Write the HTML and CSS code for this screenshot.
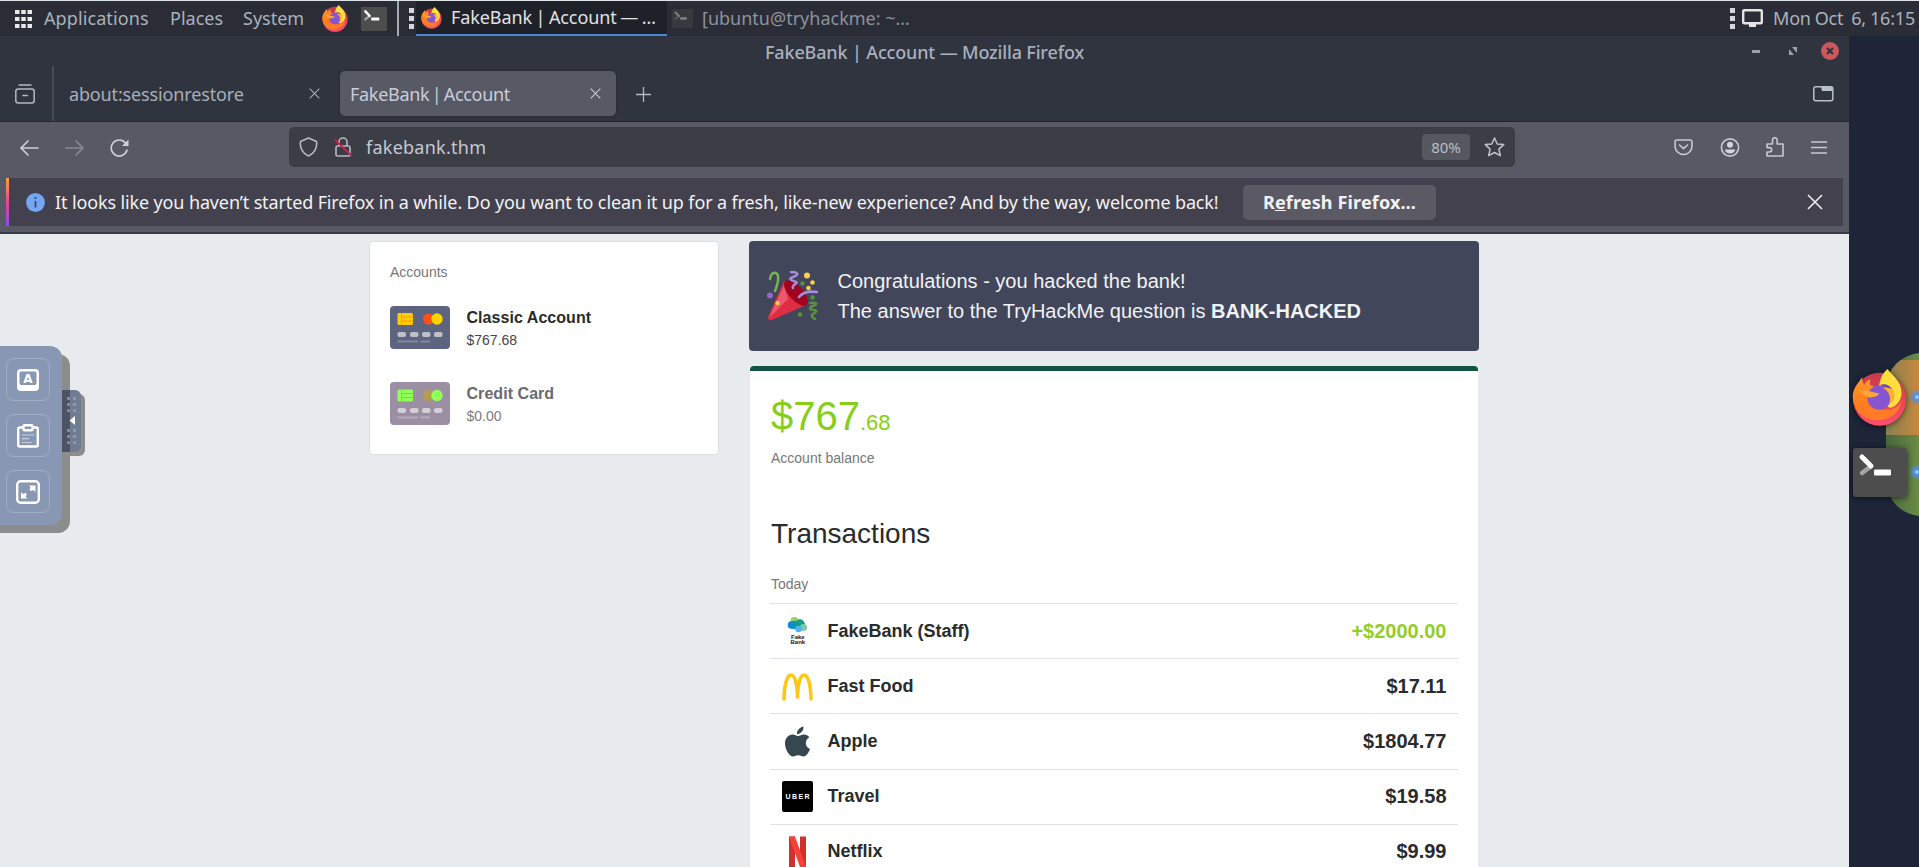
FILE: index.html
```html
<!DOCTYPE html>
<html lang="en">
<head>
<meta charset="utf-8">
<title>FakeBank | Account</title>
<link rel="stylesheet" href="styles.css">
</head>
<body>
<svg class="defs" width="0" height="0">
  <defs>
    <linearGradient id="fox-fire" x1="0" y1="0" x2="0" y2="1"><stop offset="0" stop-color="#ff9a2e"/><stop offset=".6" stop-color="#ff7d1e"/><stop offset="1" stop-color="#ff7a2a"/></linearGradient>
    <linearGradient id="fox-pink" x1="0" y1="0" x2="0" y2="1"><stop offset="0" stop-color="#c63a4a"/><stop offset="1" stop-color="#ff4f6a"/></linearGradient>
    <symbol id="firefox" viewBox="0 0 165 172">
      <circle cx="83" cy="91" r="80" fill="url(#fox-pink)"/>
      <path d="M107 0C120 20 150 35 149 75 147 98 132 114 114 118L80 92C78 40 88 15 107 0Z" fill="#ffdd3c"/>
      <path d="M30 24C20 42 10 48 3 70-4 110 20 145 62 154 105 158 145 140 150 88 146 112 120 128 98 122 58 126 44 108 50 84L82 74C76 60 64 50 54 48L54 31C46 34 40 40 37 48 32 42 30 34 30 24Z" fill="url(#fox-fire)"/>
      <circle cx="82" cy="86" r="36" fill="#8556cf"/>
      <path d="M84 48C102 46 114 52 119 62 108 56 100 56 94 58 112 66 118 86 112 106 124 100 132 84 126 68 118 50 104 44 84 48Z" fill="#ffae34"/>
      <path d="M84 48C98 43 112 47 120 60L104 56Z" fill="#6b45b8"/>
      <path d="M24 68C38 60 52 68 82 74 76 84 62 86 50 86 44 80 30 78 24 68Z" fill="#ffa63a"/>
    </symbol>
    <symbol id="terminal" viewBox="0 0 54 49">
      <rect width="54" height="49" rx="3" fill="#4d4d4d"/>
      <path d="M9 25l8-6" stroke="#a5a5a5" stroke-width="4.5" stroke-linecap="round"/>
      <path d="M9 9l9 9" stroke="#fff" stroke-width="5" stroke-linecap="round"/>
      <rect x="21" y="21.500" width="17" height="6" rx="1" fill="#fff"/>
    </symbol>
    <symbol id="cross" viewBox="0 0 16 16"><path d="M1 1l14 14M15 1L1 15" fill="none" stroke="currentColor" stroke-width="1.500"/></symbol>
  </defs>
</svg>

<header class="panel">
  <svg class="grid-icon" width="17" height="18" viewBox="0 0 17 18"><path d="M0 2h17M0 9h17M0 16h17" stroke="#e8e8e8" stroke-width="4" stroke-dasharray="4.500 1.750"/></svg>
  <span class="menu m-app">Applications</span>
  <span class="menu m-places">Places</span>
  <span class="menu m-system">System</span>
  <svg class="launch-fox" width="26" height="27"><use href="#firefox"/></svg>
  <svg class="launch-term" width="26" height="24" viewBox="0 0 54 49" preserveAspectRatio="none"><use href="#terminal"/></svg>
  <i class="panel-divider"></i>
  <span class="dots"><i></i><i></i><i></i></span>
  <div class="task active"><svg width="21" height="22"><use href="#firefox"/></svg><span class="t-fox">FakeBank | Account — …</span></div>
  <div class="task idle"><svg width="21" height="19" viewBox="0 0 54 49" preserveAspectRatio="none"><use href="#terminal"/></svg><span class="t-term">[ubuntu@tryhackme: ~…</span></div>
  <div class="tray">
    <span class="dots"><i></i><i></i><i></i></span>
    <svg width="21" height="19" viewBox="0 0 21 19"><rect x="1.200" y="1.200" width="18.600" height="13" rx="1" fill="none" stroke="#e4e4e4" stroke-width="2.400"/><path d="M7 15h7v3H7z" fill="#e4e4e4"/></svg>
    <span class="clock">Mon Oct&nbsp; 6, 16:15</span>
  </div>
</header>

<div class="screen">
  <main class="window">
    <div class="titlebar">
      <span class="title">FakeBank | Account — Mozilla Firefox</span>
      <div class="controls">
        <i class="minimize"></i>
        <svg width="8" height="8" viewBox="0 0 8 8" fill="#9aa1ab"><path d="M3 0h5v6zM0 2v6h5z"/></svg>
        <svg width="18" height="18" viewBox="0 0 18 18"><circle cx="9" cy="9" r="9" fill="#cc575d"/><path d="M6 6l6 6M12 6l-6 6" stroke="#2f343f" stroke-width="2.200"/></svg>
      </div>
    </div>

    <div class="tabs">
      <div class="recent"><svg width="20" height="20" viewBox="0 0 20 20" fill="none" stroke="#b4b8c3" stroke-width="1.500" stroke-linecap="round"><path d="M4 1h12M8 11.500h4.500"/><rect x=".8" y="5" width="18.400" height="14" rx="2.500"/></svg></div>
      <div class="tab plain"><span class="t-session">about:sessionrestore</span><svg width="11" height="11"><use href="#cross"/></svg></div>
      <div class="tab selected"><span class="t-bank">FakeBank | Account</span><svg width="11" height="11"><use href="#cross"/></svg></div>
      <svg class="plus" width="15" height="15" viewBox="0 0 15 15"><path d="M7.500 0v15M0 7.500h15" stroke="#b4b8c3" stroke-width="1.300"/></svg>
      <svg class="tab-list" width="21" height="16" viewBox="0 0 21 16" fill="none" stroke="#b9c1cb" stroke-width="1.500"><rect x=".8" y=".8" width="19" height="14" rx="2"/><path d="M8 1h11v4H9z" fill="#b9c1cb" stroke="none"/></svg>
    </div>

    <div class="toolbar">
      <div class="nav">
        <svg width="19" height="16" viewBox="0 0 19 16" fill="none" stroke="#ccced8" stroke-width="1.700" stroke-linecap="round" stroke-linejoin="round"><path d="M18 8H1M8 1L1 8l7 7"/></svg>
        <svg class="forward" width="19" height="16" viewBox="0 0 19 16" fill="none" stroke="#878994" stroke-width="1.700" stroke-linecap="round" stroke-linejoin="round"><path d="M1 8h17M11 1l7 7-7 7"/></svg>
        <svg width="19" height="18" viewBox="0 0 19 18"><path d="M15.500 4A8 8 0 1 0 17 11" fill="none" stroke="#ccced8" stroke-width="1.700" stroke-linecap="round"/><path d="M18.500.5v6.500H12z" fill="#ccced8"/></svg>
      </div>
      <div class="url">
        <svg width="19" height="20" viewBox="0 0 19 20" fill="none" stroke="#b8bac2" stroke-width="1.600" stroke-linejoin="round"><path d="M9.500 1L17.500 4.500C18.500 11 15 17 9.500 19 4 17 .5 11 1.500 4.500Z"/></svg>
        <svg class="lock" width="19" height="20" viewBox="0 0 19 20" fill="none" stroke="#b8bac2" stroke-width="1.600"><rect x="2" y="9" width="14" height="10" rx="1.500"/><path d="M5 9V5a4 4 0 0 1 8 0v4"/><path d="M1 3l17 16" stroke="#c8234c" stroke-width="1.800"/></svg>
        <span class="address">fakebank.thm</span>
        <span class="zoom">80%</span>
        <svg width="21" height="20" viewBox="0 0 21 20" fill="none" stroke="#c0c2ca" stroke-width="1.500" stroke-linejoin="round"><path d="M10.500 1l2.700 6 6.500.6-4.800 4.500 1.400 6.600-5.800-3.200-5.800 3.200 1.400-6.600L1.300 7.600l6.500-.6z"/></svg>
      </div>
      <div class="actions">
        <svg width="19" height="17" viewBox="0 0 19 17" fill="none" stroke="#c6c8d2" stroke-width="1.600" stroke-linecap="round" stroke-linejoin="round"><path d="M3 1h13q2 0 2 2v4a8.500 8.500 0 0 1-17 0V3q0-2 2-2zM5.500 6l4 3.700 4-3.700"/></svg>
        <svg width="20" height="19" viewBox="0 0 20 19"><circle cx="10" cy="9.500" r="8.600" fill="none" stroke="#c6c8d2" stroke-width="1.600"/><circle cx="10" cy="6.800" r="3" fill="#d2d4de"/><path d="M4.800 11.500h10.400q-1 4-5.200 4t-5.200-4z" fill="#d2d4de"/></svg>
        <svg width="18" height="20" viewBox="0 0 18 20" fill="none" stroke="#c6c8d2" stroke-width="1.600" stroke-linejoin="round"><path d="M1 7h5.500V3a2.300 2.300 0 0 1 4.600 0v4H17v12H1v-4h2.500a2.200 2.200 0 0 0 0-4.400H1z"/></svg>
        <svg width="16" height="13" viewBox="0 0 16 13"><path d="M0 1h16M0 6.500h16M0 12h16" stroke="#c6c8d2" stroke-width="1.500"/></svg>
      </div>
    </div>

    <div class="notice-wrap">
      <div class="notice">
        <svg width="19" height="19" viewBox="0 0 19 19"><circle cx="9.500" cy="9.500" r="9.400" fill="#73a7f3"/><path d="M9.500 4v2M9.500 8v6.500" stroke="#42414d" stroke-width="1.700"/></svg>
        <span class="notice-text">It looks like you haven’t started Firefox in a while. Do you want to clean it up for a fresh, like-new experience? And by the way, welcome back!</span>
        <span class="refresh">R<u>e</u>fresh Firefox…</span>
        <svg class="dismiss" width="16" height="16"><use href="#cross"/></svg>
      </div>
    </div>

    <div class="page">
      <section class="accounts">
        <h2>Accounts</h2>
        <div class="account">
          <svg width="60" height="43" viewBox="0 0 60 43"><rect width="60" height="43" rx="4" fill="#5d6480"/><rect x="7.500" y="7" width="15.500" height="12" rx="1.500" fill="#ffca06"/><path d="M11.500 7v12M12 11h11M12 15h11" stroke="#ff9f0a"/><circle cx="38.500" cy="13" r="5.500" fill="#ff5018"/><circle cx="47" cy="13" r="5.700" fill="#ffd000"/><g fill="#bfc1c8"><rect x="7.500" y="26" width="8.500" height="5" rx="2"/><rect x="20" y="26" width="8.500" height="5" rx="2"/><rect x="32" y="26" width="8.500" height="5" rx="2"/><rect x="44" y="26" width="8.500" height="5" rx="2"/></g><path d="M7.500 35.500H28M30.500 35.500H40" stroke="#84889a" stroke-width="1.800"/></svg>
          <div><strong class="n1">Classic Account</strong><span>$767.68</span></div>
        </div>
        <div class="account muted">
          <svg width="60" height="43" viewBox="0 0 60 43"><rect width="60" height="43" rx="4" fill="#9c8fa3"/><rect x="7.500" y="7.500" width="15.500" height="12" rx="1.500" fill="#90ff58"/><path d="M11.500 7.500v12M12 11.500h11M12 15.500h11" stroke="#76d850"/><circle cx="38.500" cy="13.500" r="5.500" fill="#b89c4e"/><circle cx="47" cy="13.500" r="5.700" fill="#90ff58"/><g fill="#d4cfd7"><rect x="7.500" y="26" width="8.500" height="5" rx="2"/><rect x="20" y="26" width="8.500" height="5" rx="2"/><rect x="32" y="26" width="8.500" height="5" rx="2"/><rect x="44" y="26" width="8.500" height="5" rx="2"/></g><path d="M7.500 35.500H28M30.500 35.500H40" stroke="#b5aab9" stroke-width="1.800"/></svg>
          <div><strong class="n2">Credit Card</strong><span>$0.00</span></div>
        </div>
      </section>

      <div class="content">
        <section class="banner">
          <svg width="51" height="50" viewBox="0 0 51 50" fill="none" stroke-linecap="round">
            <path d="M17 10L1 46q0 4 4 3L41 33Z" fill="#dd2e44"/>
            <path d="M17 14L2 47 21 28Z" fill="#ea596e"/>
            <ellipse cx="29" cy="22" rx="7" ry="16" transform="rotate(-42 29 22)" fill="#a0041e"/>
            <path d="M3 8C4 1 10 0 11 5 12 10 10 15 8 20" stroke="#77b255" stroke-width="2.500"/>
            <path d="M24 1c8 0 8 3 2 5s0 4 3 5-5 3-3 6" stroke="#a78de0" stroke-width="2.500"/>
            <path d="M32 26c4-5 11-6 18-5" stroke="#a78de0" stroke-width="2.600"/>
            <path d="M43 32c7-1 8 1 3 3s-3 4 1 4 2 3-1 4 0 4 2 5" stroke="#5c913b" stroke-width="2.500"/>
            <g fill="#ffcc4d"><circle cx="40" cy="4.500" r="3"/><circle cx="45.500" cy="11.500" r="2.300"/><circle cx="41.500" cy="17" r="2.300"/><circle cx="10.500" cy="32" r="2.200"/></g>
            <g fill="#5c913b"><circle cx="35.500" cy="12.500" r="2.200"/><circle cx="45.500" cy="26.500" r="2.300"/><circle cx="33" cy="43.500" r="2.200"/></g>
            <circle cx="3" cy="24.500" r="3" fill="#9266cc"/>
          </svg>
          <p>Congratulations - you hacked the bank!<br>The answer to the TryHackMe question is <b>BANK-HACKED</b></p>
        </section>
        <section class="ledger">
          <div class="balance">$767<small>.68</small></div>
          <div class="caption">Account balance</div>
          <h1>Transactions</h1>
          <div class="today">Today</div>
          <div class="row">
            <svg width="31" height="31" viewBox="0 0 31 31"><circle cx="12.500" cy="5" r="4" fill="#8ed06e"/><circle cx="9.500" cy="9" r="3.800" fill="#0c86f5"/><rect x="8" y="5" width="15" height="8" rx="4" fill="#138ec0"/><circle cx="18" cy="7.500" r="4.200" fill="#179d85"/><circle cx="21.500" cy="11.500" r="3.600" fill="#7fcaa8"/><circle cx="16.500" cy="13" r="3.300" fill="#4fb4ef"/><text x="9" y="22.500" class="fake-logo">Fake</text><text x="8.500" y="28.300" class="fake-logo">Bank</text></svg>
            <span class="r1">FakeBank (Staff)</span><b class="credit">+$2000.00</b>
          </div>
          <div class="row">
            <svg width="31" height="31" viewBox="0 0 31 31" fill="none" stroke="#ffc713" stroke-width="3.500"><path d="M2 29.500C2 14 5 4 9 4S15.500 14 15.500 27.500C15.500 14 18 4 22 4S29 14 29 29.500"/></svg>
            <span class="r2">Fast Food</span><b>$17.11</b>
          </div>
          <div class="row">
            <svg width="31" height="31" viewBox="0 0 31 31" fill="#37474f"><path d="M21.500.5c.5 4-3 7.500-6.500 7.700C14.500 4.500 18 1 21.500.5zM16 10c2 0 3.500-1.500 6-1.500 2.200 0 4 1 5.300 2.700-5 3-4.400 9.500.7 11.800-1.500 4-4 7.500-6.500 7.500-2 0-3-1.200-5.300-1.200S13 30.500 11 30.500C7 30.500 3 23 3 17.500s3.500-9 7.500-9c2.300 0 3.800 1.500 5.500 1.500z"/></svg>
            <span class="r3">Apple</span><b>$1804.77</b>
          </div>
          <div class="row">
            <svg width="31" height="31" viewBox="0 0 31 31"><rect width="31" height="31" rx="2" fill="#000"/><text x="3.500" y="17.500" class="uber-logo" textLength="24">UBER</text></svg>
            <span class="r4">Travel</span><b>$19.58</b>
          </div>
          <div class="row">
            <svg width="31" height="31" viewBox="0 0 31 31"><path d="M7 .5h6V31H7zM18 .5h6V31h-6z" fill="#d32f2f"/><path d="M7 .5h6L24 31h-6z" fill="#f44336"/></svg>
            <span class="r5">Netflix</span><b>$9.99</b>
          </div>
        </section>
      </div>
    </div>
  </main>

  <aside class="desktop">
    <svg width="70" height="831" viewBox="1849 36 70 831">
      <defs>
        <clipPath id="dock-shape"><rect x="1886" y="353" width="80" height="163" rx="36"/></clipPath>
        <linearGradient id="dock-orange"><stop offset="0" stop-color="#858252"/><stop offset="1" stop-color="#c8873d"/></linearGradient>
        <linearGradient id="dock-green"><stop offset="0" stop-color="#48673f"/><stop offset="1" stop-color="#6b8b46"/></linearGradient>
        <radialGradient id="glow"><stop offset="0" stop-color="#c8e2ff"/><stop offset=".35" stop-color="#4c90e8"/><stop offset="1" stop-color="#4c90e8" stop-opacity="0"/></radialGradient>
      </defs>
      <g clip-path="url(#dock-shape)"><rect x="1886" y="353" width="33" height="163" fill="url(#dock-green)"/><rect x="1886" y="360" width="33" height="75" fill="url(#dock-orange)"/></g>
      <circle cx="1917" cy="397" r="8" fill="url(#glow)"/><circle cx="1917" cy="472" r="8" fill="url(#glow)"/>
      <g class="dock-icons"><use href="#firefox" x="1852" y="369" width="55" height="57"/><use href="#terminal" x="1853" y="448" width="54" height="49"/></g>
    </svg>
  </aside>
</div>

<nav class="remote">
  <div class="handle"><svg width="19" height="62" viewBox="0 0 19 62"><rect width="8" height="62" fill="#4c5363"/><path d="M6.500 7v15M12.500 7v15M6.500 39v15M12.500 39v15" stroke="#9aa5b7" stroke-opacity=".7" stroke-width="3" stroke-dasharray="3 3.100"/><path d="M13 26v9l-5.500-4.500z" fill="#fff"/></svg></div>
  <div class="remote-body">
    <div class="tool"><svg width="22" height="22" viewBox="0 0 22 22"><path d="M4 0h14q4 0 4 4v14q0 4-4 4H4q-4 0-4-4V4q0-4 4-4zm0 2.500q-1.500 0-1.500 1.500v10q0 2 2 2h13q2 0 2-2V4q0-1.500-1.500-1.500z" fill="#fff" fill-rule="evenodd"/><text x="11" y="14" class="key" text-anchor="middle">A</text></svg></div>
    <div class="tool"><svg width="22" height="24" viewBox="0 0 22 24" fill="none" stroke="#fff" stroke-width="2.400"><rect x="1.200" y="3.500" width="19.600" height="19" rx="1.500"/><rect x="6.500" y="1.200" width="9" height="5" rx="1" fill="#8898b4"/><path d="M5 11h12M5 14.700h7M5 18.500h9.500" stroke="#c8d1df" stroke-width="1.200"/></svg></div>
    <div class="tool"><svg width="24" height="24" viewBox="0 0 24 24"><rect x="1.200" y="1.200" width="21.600" height="21.600" rx="3.500" fill="none" stroke="#fff" stroke-width="2.400"/><path d="M13 5.500h6.500V12l-2-2-2.500 1-1.500-1.500 1-2zM11.500 18.500H5V12l2 2 2.500-1 1.500 1.500-1.500 2z" fill="#fff"/></svg></div>
  </div>
</nav>
</body>
</html>
```
FILE: styles.css
```css
* { box-sizing: border-box; }
body { margin: 0; width: 1919px; height: 867px; overflow: hidden; background: #1d2537; font-family: "Liberation Sans", Arial, sans-serif; }
svg { display: block; flex: none; }
.defs { position: absolute; }

.panel, .titlebar, .tabs, .toolbar, .notice { font-family: "Noto Sans", sans-serif; white-space: nowrap; }

.panel { display: flex; align-items: center; height: 36px; border-top: 1px solid #dfe5e8; background: #2b2d36; color: #a9b2bf; font-size: 18px; }
.panel span { line-height: 33px; }
.panel > .menu, .clock, .t-term { padding-bottom: 1px; }
.grid-icon { margin-left: 15px; }
.menu { flex: none; }
.m-app { margin-left: 12px; width: 126px; letter-spacing: .1px; }
.m-places { width: 73px; }
.m-system { width: 79px; }
.launch-term { margin-left: 13px; }
.panel-divider { width: 2px; height: 35px; margin: 0 10px 0 10px; background: #a5a9b1; }
.dots { display: flex; flex-direction: column; gap: 3px; flex: none; }
.dots i { width: 5px; height: 5px; background: #d5d9df; }
.task { display: flex; align-items: center; height: 35px; flex: none; }
.task.active { width: 251px; margin-left: 2px; padding-left: 5px; background: #1f2128; border-bottom: 2px solid #4b87d8; color: #e2e2e2; gap: 9px; }
.t-fox { letter-spacing: -.1px; word-spacing: -1px; }
.task.idle { padding-left: 5px; gap: 9px; color: #8b929d; }
.task.idle svg { opacity: .4; }
.tray { display: flex; align-items: center; margin-left: auto; padding-right: 4px; gap: 7px; }
.clock { margin-left: 3px; width: 142px; letter-spacing: -.2px; word-spacing: -.5px; }

.screen { display: flex; height: 831px; }
.window { width: 1849px; height: 831px; overflow: hidden; background: #2f343f; }
.desktop { width: 70px; background: #1d2537; }
.dock-icons { filter: drop-shadow(0 1px 3px rgba(0,0,0,.6)); }

.titlebar { display: flex; height: 30px; align-items: center; padding: 0 10px 0 765px; color: #a9b0bd; font-size: 18px; font-weight: 500; letter-spacing: -.15px; }
.title { padding-top: 1px; }
.controls { display: flex; align-items: center; margin-left: auto; gap: 28px; }
.controls svg:last-child { margin-left: -4px; }
.minimize { width: 8px; height: 3px; background: #9aa1ab; margin-right: 1px; }

.tabs { display: flex; height: 56px; border-bottom: 1px solid #22252e; color: #a8aeba; font-size: 18px; }
.recent { width: 54px; padding: 18px 0 0 15px; border-right: 2px solid #474b57; }
.tab { display: flex; align-items: center; justify-content: space-between; height: 45px; margin-top: 5px; padding: 0 15px 0 15px; }
.tab.plain { width: 280px; margin-right: 6px; padding-right: 14px; }
.tab.selected { width: 276px; padding-left: 10px; background: #575965; border-radius: 5px; color: #c9cdd8; box-shadow: 0 0 3px #252833; }
.t-session { letter-spacing: -.15px; }
.t-bank { letter-spacing: -.3px; word-spacing: -2px; }
.plus { margin: 21px 0 0 20px; }
.tab-list { margin: 20px 15px 0 auto; }

.toolbar { display: flex; height: 56px; background: #575965; }
.nav { display: flex; width: 289px; padding: 18px 0 0 20px; gap: 26px; }
.nav svg:last-child { margin-top: -1px; }
.url { display: flex; align-items: center; width: 1226px; height: 40px; margin-top: 5px; padding: 0 10px 0 10px; border-radius: 5px; background: #3c3e46; color: #c5c9d1; font-size: 18px; }
.lock { margin: 0 13px 0 16px; }
.address { letter-spacing: .25px; }
.zoom { width: 48px; height: 26px; margin: 0 14px 0 auto; border-radius: 4px; background: #55585f; font-size: 15px; line-height: 26px; text-align: center; color: #b8bdc7; }
.actions { display: flex; align-items: center; height: 40px; margin: 5px 0 0 159px; gap: 26.500px; }

.notice-wrap { height: 56px; padding: 0 6px; background: #575965; border-bottom: 2px solid #393c49; }
.notice { display: flex; align-items: center; height: 48px; padding-left: 17px; border-left: 3px solid; border-image: linear-gradient(#ffa436, #e3409c 55%, #8a50f0) 1; background: #42414d; color: #f2f2f4; font-size: 18px; }
.notice-text { width: 1164px; margin: 0 24px 0 10px; flex: none; letter-spacing: -.13px; }
.refresh { width: 193px; height: 35px; border-radius: 5px; background: #5b5964; text-align: center; line-height: 35px; font-weight: 700; font-size: 18px; letter-spacing: .15px; }
.dismiss { margin: 0 20px 0 auto; }

.page { display: flex; align-items: flex-start; height: 633px; padding: 7px 0 0 370px; gap: 31px; background: #e7ebee; color: #292b2c; }
.accounts { width: 348px; height: 212px; margin-top: 1px; padding: 20px; border-radius: 4px; background: #fff; box-shadow: 0 0 1px 1px #dfe2e5; }
.accounts h2 { margin: 0 0 23px; font-size: 14px; font-weight: 400; line-height: 21px; color: #777; }
.account { display: flex; gap: 16.500px; height: 76px; }
.account strong { display: block; margin-top: 3px; font-size: 16px; line-height: 18px; letter-spacing: .05px; }
.account span { display: block; margin-top: 3px; font-size: 14px; line-height: 20px; color: #444649; }
.muted strong { color: #6a6b6c; }
.account.muted span { color: #7c7d7e; }

.content { width: 730px; }
.banner { display: flex; height: 110px; padding: 30px 0 0 18px; gap: 19.500px; border-radius: 4px; background: #41465b; color: #f1f2f5; }
.banner p { margin: -5px 0 0; font-size: 20px; line-height: 30px; white-space: nowrap; }
.ledger { width: 728px; height: 520px; margin: 15px 0 0 1px; padding: 22px 20px 0; border-top: 5px solid #125343; border-radius: 4px 4px 0 0; background: #fff; }
.balance { padding-left: 1px; color: #86cf16; font-size: 40px; line-height: 46px; }
.balance small { font-size: 22px; }
.caption, .today { padding-left: 1px; color: #777; font-size: 14px; line-height: 20px; }
.caption { margin-top: 2px; }
.ledger h1 { margin: 49px 0 0 1px; font-size: 28px; line-height: 34px; font-weight: 400; }
.today { height: 29px; margin-top: 23px; }
.row { display: flex; align-items: center; height: 55.200px; padding: 0 11.500px 0 12px; border-top: 1px solid #dee2e6; font-size: 18px; font-weight: 700; }
.row span { margin-left: 14.500px; }
.row b { margin-left: auto; font-size: 20px; }
.row .credit { color: #93ce27; }
.fake-logo { font: 700 6px "Liberation Sans", sans-serif; fill: #222; }
.uber-logo { font: 700 7px "Liberation Sans", sans-serif; fill: #fff; }

.remote { position: absolute; left: 0; top: 346px; width: 90px; height: 190px; }
.remote-body { position: relative; display: flex; flex-direction: column; gap: 13px; width: 62px; height: 179px; padding: 12px 0 0 6px; border-radius: 0 12px 12px 0; background: #8898b4; box-shadow: 8px 8px 0 #8c8c8c, 0 8px 0 #8c8c8c; }
.tool { display: flex; align-items: center; justify-content: center; width: 44px; height: 43px; border: 1px solid #a0adc3; border-radius: 8px; }
.key { font: 700 12px "DejaVu Sans", sans-serif; fill: #fff; }
.handle { position: absolute; z-index: 1; left: 62px; top: 44px; width: 19px; height: 62px; border-radius: 0 6px 6px 0; background: #6f7c92; box-shadow: 4px 4px 0 #8c8c8c; }
```
